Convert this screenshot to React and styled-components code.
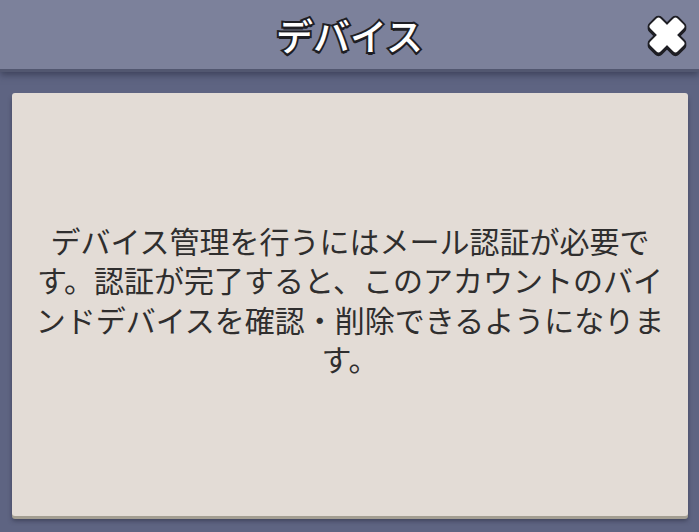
import React from "react";
import styled, { createGlobalStyle } from "styled-components";

const Global = createGlobalStyle`
  html, body { margin: 0; padding: 0; }
  body {
    width: 699px;
    height: 532px;
    overflow: hidden;
    background: #5e6482;
    font-family: "Noto Sans CJK JP", "Noto Sans", sans-serif;
  }
`;

const Screen = styled.div`
  display: flex;
  flex-direction: column;
  height: 532px;
`;

const Header = styled.header`
  position: relative;
  z-index: 1;
  height: 69px;
  flex: none;
  display: grid;
  grid-template-columns: 1fr auto 1fr;
  align-items: center;
  background: #7c819b;
  border-bottom: 3px solid #525770;
  box-shadow: 0 3px 7px rgba(35, 38, 58, 0.55);
`;

const Title = styled.h1`
  grid-column: 2;
  margin: 0;
  padding-top: 2px;
  font-family: "Noto Sans CJK JP", sans-serif;
  font-size: 37px;
  font-weight: 500;
  line-height: 1;
  color: #fff;
  letter-spacing: 0;
  -webkit-text-stroke: 4px #1e1e24;
  paint-order: stroke fill;
  text-shadow: 0 3px 0 #1e1e24;
`;

const CloseButton = styled.button`
  grid-column: 3;
  justify-self: end;
  margin-right: 9px;
  padding: 0;
  border: 0;
  background: none;
  width: 46px;
  height: 46px;
  display: flex;
  cursor: pointer;
`;

const Main = styled.main`
  flex: 1;
  padding: 21px 11px 16px 12px;
  display: flex;
`;

const Panel = styled.section`
  flex: 1;
  display: flex;
  align-items: center;
  justify-content: center;
  padding: 0 18px 10px;
  background: #e3dcd6;
  border-radius: 3px;
  box-shadow: 0 3px 0 #a39e92, 0 5px 4px rgba(40, 42, 60, 0.55);
`;

const Message = styled.p`
  margin: 0;
  font-family: "Noto Sans CJK JP", sans-serif;
  font-size: 30px;
  font-weight: 400;
  line-height: 39.3px;
  color: #2f2e2e;
  text-align: center;
`;

const CloseIcon = () => (
  <svg width="46" height="46" viewBox="0 0 48 48">
    <g transform="translate(0 2)">
      <rect x="16.5" y="4" width="15" height="40" rx="3" fill="#1e1e24" stroke="#1e1e24" strokeWidth="4" transform="rotate(45 24 24)" />
      <rect x="16.5" y="4" width="15" height="40" rx="3" fill="#1e1e24" stroke="#1e1e24" strokeWidth="4" transform="rotate(-45 24 24)" />
    </g>
    <rect x="16.5" y="4" width="15" height="40" rx="3" fill="#1e1e24" stroke="#1e1e24" strokeWidth="4" transform="rotate(45 24 24)" />
    <rect x="16.5" y="4" width="15" height="40" rx="3" fill="#1e1e24" stroke="#1e1e24" strokeWidth="4" transform="rotate(-45 24 24)" />
    <rect x="16.5" y="4" width="15" height="40" rx="3" fill="#ffffff" transform="rotate(45 24 24)" />
    <rect x="16.5" y="4" width="15" height="40" rx="3" fill="#ffffff" transform="rotate(-45 24 24)" />
  </svg>
);

export default function App() {
  return (
    <Screen>
      <Global />
      <Header>
        <Title>デバイス</Title>
        <CloseButton aria-label="閉じる">
          <CloseIcon />
        </CloseButton>
      </Header>
      <Main>
        <Panel>
          <Message>
            デバイス管理を行うにはメール認証が必要です。認証が完了すると、このアカウントのバインドデバイスを確認・削除できるようになります。
          </Message>
        </Panel>
      </Main>
    </Screen>
  );
}
